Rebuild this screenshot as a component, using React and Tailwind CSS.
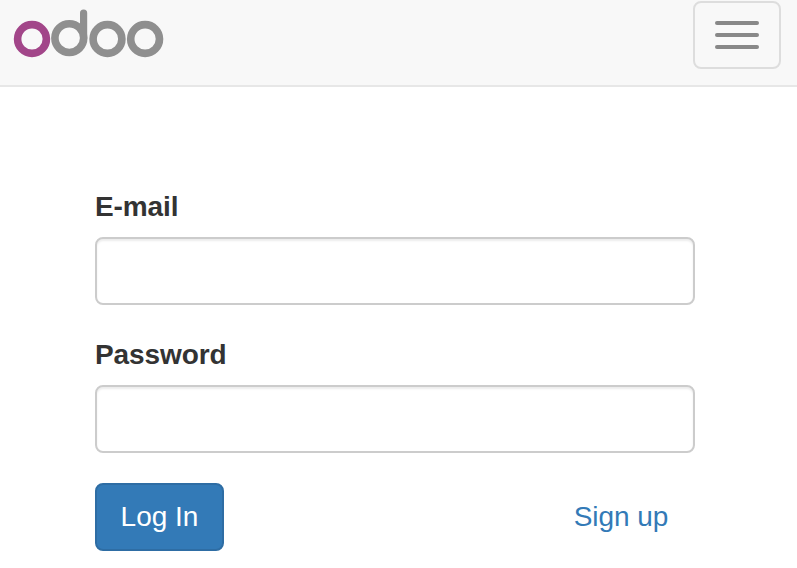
function Logo() {
  return (
    <svg width="152" height="50" viewBox="12 8 152 50" fill="none" strokeWidth="7.6" role="img" aria-label="odoo">
      <g stroke="#8f8f8f">
        <circle cx="69.3" cy="38.1" r="14.4" />
        <path d="M83.6 13V38.1" strokeWidth="7.2" strokeLinecap="round" />
        <circle cx="107.5" cy="39" r="14.4" />
        <circle cx="145.1" cy="39" r="14.4" />
      </g>
      <circle cx="32" cy="39" r="14.4" stroke="#a24689" />
    </svg>
  );
}

function Field({ label, type, id }) {
  return (
    <div className="mb-[30px]">
      <label htmlFor={id} className="mb-2.5 block font-bold tracking-[-0.1px]">
        {label}
      </label>
      <input
        id={id}
        type={type}
        className="block h-[68px] w-full rounded-lg border-2 border-[#ccc] bg-white px-6 shadow-[inset_0_2px_2px_rgba(0,0,0,0.075)] outline-none"
      />
    </div>
  );
}

export default function App() {
  return (
    <div className="h-[568px] overflow-hidden bg-white font-['Liberation_Sans',Arial,sans-serif] text-[28px] leading-10 text-[#333]">
      <header className="flex h-[87px] items-start justify-between border-b-2 border-[#e7e7e7] bg-[#f8f8f8] pr-4 pl-3">
        <a href="#" className="mt-2">
          <Logo />
        </a>
        <button
          type="button"
          aria-label="Menu"
          className="mt-px flex h-[68px] w-[88px] flex-col items-center justify-center gap-2 rounded-lg border-2 border-[#ddd]"
        >
          <span className="h-1 w-11 rounded-[2px] bg-[#888]" />
          <span className="h-1 w-11 rounded-[2px] bg-[#888]" />
          <span className="h-1 w-11 rounded-[2px] bg-[#888]" />
        </button>
      </header>
      <form className="ml-[95px] w-[600px] pt-[100px]">
        <Field label="E-mail" type="text" id="email" />
        <Field label="Password" type="password" id="password" />
        <div className="flex items-center justify-between pr-[26px]">
          <button
            type="button"
            className="h-[68px] w-[129px] rounded-lg border-2 border-[#2e6da4] bg-[#337ab7] text-white"
          >
            Log In
          </button>
          <a href="#" className="mr-[0.7px] tracking-[-0.05px] text-[#337ab7]">
            Sign up
          </a>
        </div>
      </form>
    </div>
  );
}
